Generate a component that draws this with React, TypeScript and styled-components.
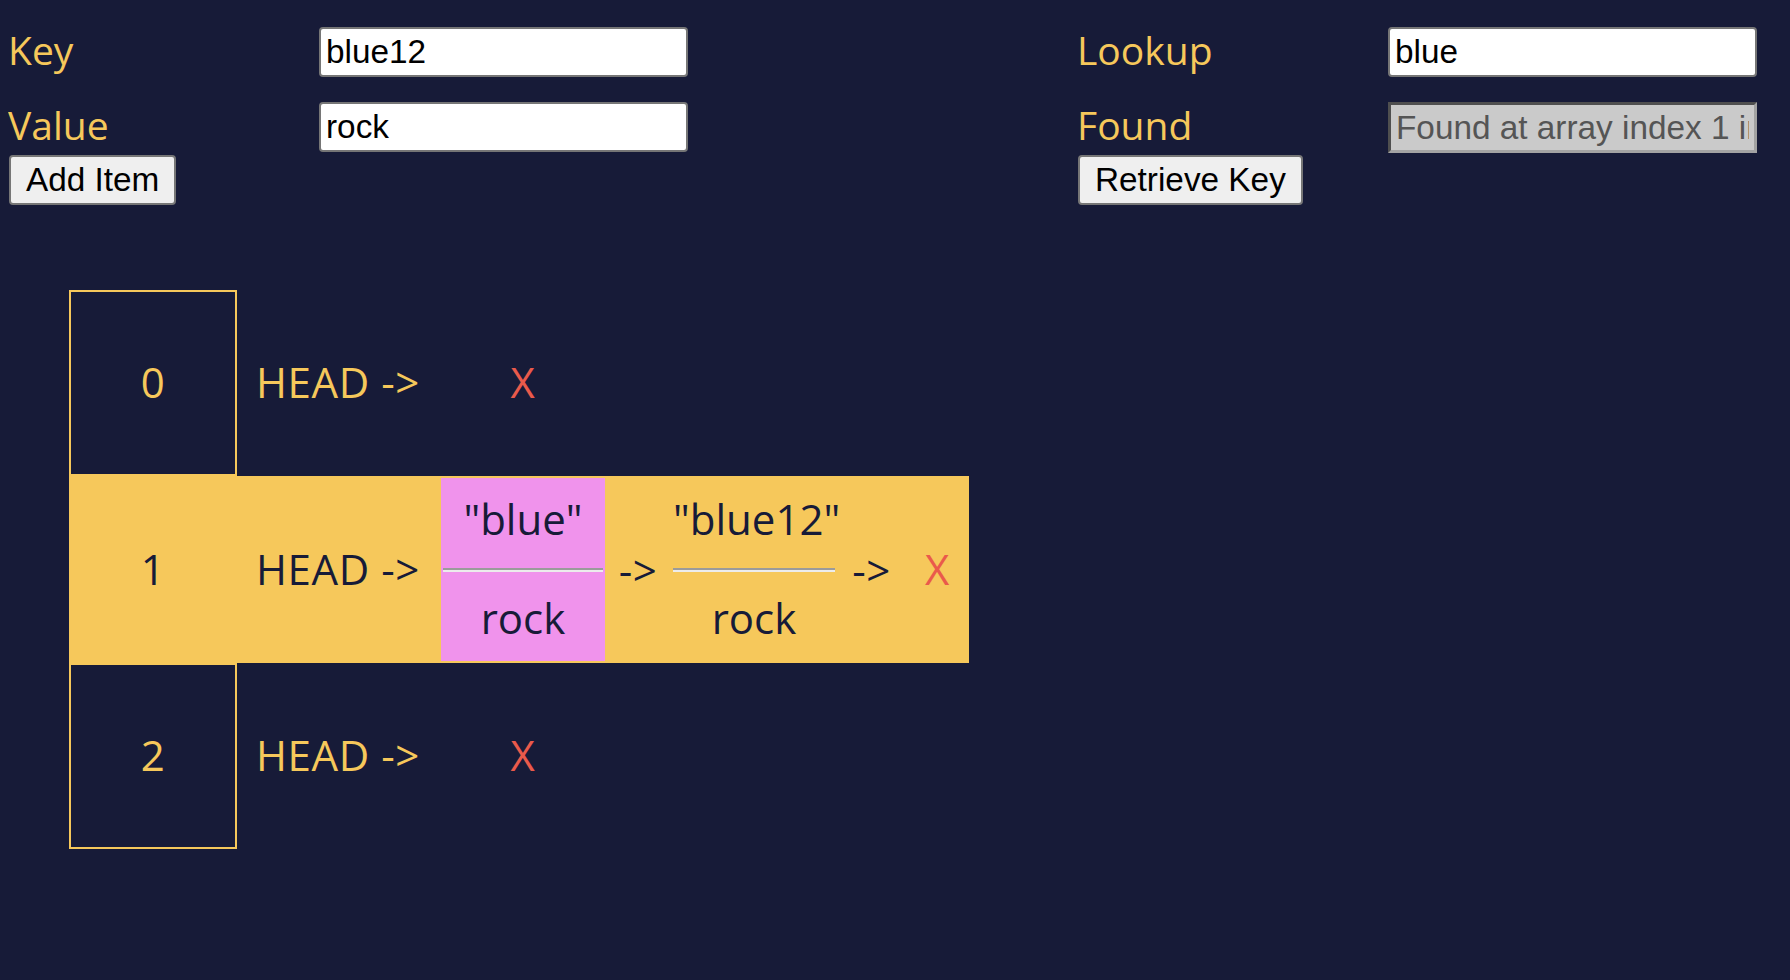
import React from 'react';
import styled, { createGlobalStyle } from 'styled-components';

const NAVY = '#171b38';
const YELLOW = '#f6c85b';
const PINK = '#f093ec';
const RED = '#ea5a4b';

const GlobalStyle = createGlobalStyle`
  html { background: ${NAVY}; }
  body {
    margin: 8px;
    background: ${NAVY};
    font-family: 'Open Sans', 'Noto Sans', sans-serif;
  }
  * { box-sizing: border-box; }
`;

const Controls = styled.div`
  display: flex;
  justify-content: space-between;
  padding: 19px 25px 0 0;
`;

const Panel = styled.section`
  display: flex;
  flex-direction: column;
  width: 680px;
`;

const Field = styled.div`
  display: grid;
  grid-template-columns: 311px 369px;
  align-items: center;
  height: 50px;
  & + & {
    margin-top: 25px;
  }
`;

const Label = styled.label`
  font-family: 'Open Sans', sans-serif;
  font-size: 39px;
  line-height: 1;
  padding-bottom: 6px;
  color: ${YELLOW};
`;

const TextInput = styled.input<{ $muted?: boolean }>`
  width: 369px;
  height: ${(p) => (p.$muted ? '51px' : '50px')};
  padding: 0 5px;
  font-family: 'Liberation Sans', Arial, sans-serif;
  font-size: 33.33px;
  color: ${(p) => (p.$muted ? '#555555' : '#000000')};
  background: ${(p) => (p.$muted ? '#cacaca' : '#ffffff')};
  border: ${(p) => (p.$muted ? '3px inset #a3a3a3' : '2px solid #767676')};
  border-radius: ${(p) => (p.$muted ? '0' : '4px')};
  outline: none;
`;

const ActionButton = styled.button`
  align-self: flex-start;
  margin: 3px 0 0 1px;
  height: 50px;
  padding: 0 15px;
  font-family: 'Liberation Sans', Arial, sans-serif;
  font-size: 33.33px;
  color: #000000;
  background: #efefef;
  border: 2px solid #767676;
  border-radius: 4px;
`;

const Table = styled.div`
  display: flex;
  flex-direction: column;
  margin: 85px 0 0 61px;
  width: 900px;
`;

const Row = styled.div<{ $active?: boolean }>`
  display: grid;
  grid-template-columns: 168px 204px 164px 66px 166px 69px 63px;
  align-items: center;
  height: ${(p) => (p.$active ? '187px' : '186px')};
  background: ${(p) => (p.$active ? YELLOW : 'transparent')};
  color: ${(p) => (p.$active ? NAVY : YELLOW)};
  font-family: 'Open Sans', sans-serif;
  font-size: 42px;
  line-height: 50px;
  letter-spacing: 0.6px;
`;

const IndexCell = styled.div`
  align-self: stretch;
  display: flex;
  align-items: center;
  justify-content: center;
  padding-bottom: 2px;
  border: 2px solid ${YELLOW};
`;

const HeadCell = styled.div`
  padding: 0 0 2px 19px;
  white-space: nowrap;
`;

const NullMark = styled.div<{ $col: number }>`
  grid-column: ${(p) => p.$col};
  justify-self: center;
  padding-bottom: 2px;
  color: ${RED};
`;

const Arrow = styled.div`
  justify-self: center;
  white-space: nowrap;
`;

const Node = styled.div<{ $found?: boolean }>`
  align-self: stretch;
  margin: 2px 0;
  padding: 16px 2px 0;
  display: flex;
  flex-direction: column;
  text-align: center;
  letter-spacing: 0;
  background: ${(p) => (p.$found ? PINK : 'transparent')};
  white-space: nowrap;
`;

const NodeKey = styled.div`
  margin-bottom: 24px;
`;

const Divider = styled.div`
  height: 4px;
  border-top: 2px solid #9b9b9b;
  border-bottom: 2px solid #ececec;
`;

const NodeValue = styled.div`
  margin-top: 21px;
`;

type Entry = { key: string; value: string; found?: boolean };

const buckets: Entry[][] = [
  [],
  [
    { key: 'blue', value: 'rock', found: true },
    { key: 'blue12', value: 'rock' },
  ],
  [],
];

export default function App() {
  return (
    <>
      <GlobalStyle />
      <Controls>
        <Panel>
          <Field>
            <Label>Key</Label>
            <TextInput defaultValue="blue12" />
          </Field>
          <Field>
            <Label>Value</Label>
            <TextInput defaultValue="rock" />
          </Field>
          <ActionButton>Add Item</ActionButton>
        </Panel>
        <Panel>
          <Field>
            <Label>Lookup</Label>
            <TextInput defaultValue="blue" />
          </Field>
          <Field>
            <Label>Found</Label>
            <TextInput $muted readOnly value="Found at array index 1 in the linked list" />
          </Field>
          <ActionButton>Retrieve Key</ActionButton>
        </Panel>
      </Controls>
      <Table>
        {buckets.map((list, i) => (
          <Row key={i} $active={list.length > 0}>
            <IndexCell>{i}</IndexCell>
            <HeadCell>{'HEAD ->'}</HeadCell>
            {list.map((e, j) => (
              <React.Fragment key={e.key}>
                {j > 0 && <Arrow>{'->'}</Arrow>}
                <Node $found={e.found}>
                  <NodeKey>{`"${e.key}"`}</NodeKey>
                  <Divider />
                  <NodeValue>{e.value}</NodeValue>
                </Node>
              </React.Fragment>
            ))}
            {list.length > 0 && <Arrow>{'->'}</Arrow>}
            <NullMark $col={list.length > 0 ? 3 + list.length * 2 : 3}>X</NullMark>
          </Row>
        ))}
      </Table>
    </>
  );
}
